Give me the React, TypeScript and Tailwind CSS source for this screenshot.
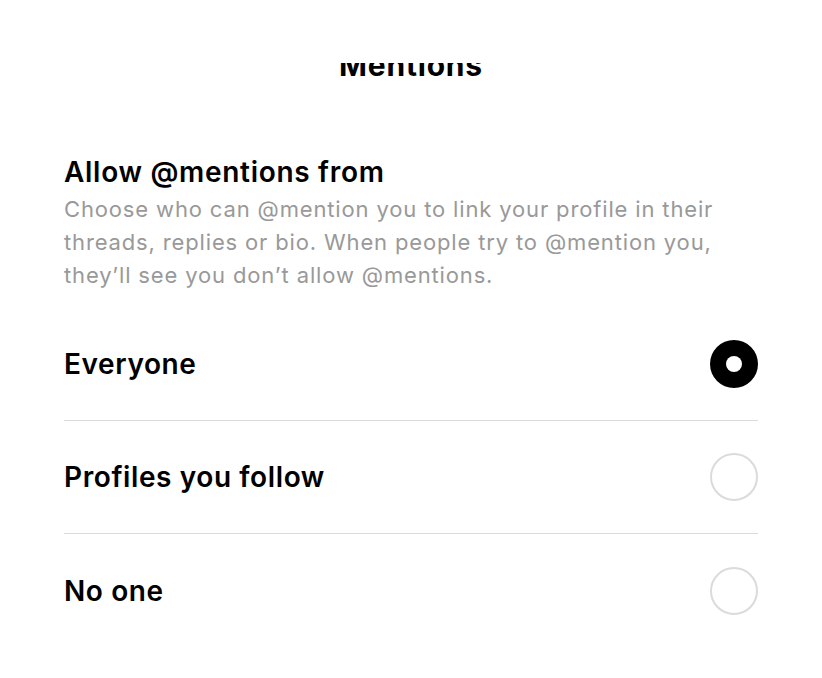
import { useState } from "react";

const options = ["Everyone", "Profiles you follow", "No one"];

export default function App() {
  const [selected, setSelected] = useState("Everyone");

  return (
    <div className="h-[678px] w-full overflow-hidden bg-white pt-[63px] font-['Inter',sans-serif] text-black">
      {/* header title, clipped by the sheet edge */}
      <div className="h-[24px] overflow-hidden text-center">
        <h1 className="-mt-[13px] text-[30px] font-bold leading-[30px] tracking-[0.8px]">
          Mentions
        </h1>
      </div>

      <div className="px-16 pt-[67px]">
        <h2 className="text-[28px] font-semibold leading-[36px] tracking-[0.7px]">
          Allow @mentions from
        </h2>
        <p className="mt-[3px] text-[22px] leading-[33px] tracking-[0.85px] text-[#999999]">
          Choose who can @mention you to link your profile in their threads,
          replies or bio. When people try to @mention you, they’ll see you
          don’t allow @mentions.
        </p>

        <div className="mt-[16px] flex flex-col">
          {options.map((option, i) => (
            <button
              key={option}
              onClick={() => setSelected(option)}
              className={`flex h-[113px] items-center justify-between text-left ${
                i < options.length - 1 ? "border-b border-[#dbdbdb]" : ""
              }`}
            >
              <span className="text-[28px] font-semibold leading-[36px] tracking-[0.6px]">
                {option}
              </span>
              <Radio checked={selected === option} />
            </button>
          ))}
        </div>
      </div>
    </div>
  );
}

function Radio({ checked }: { checked: boolean }) {
  if (checked) {
    return (
      <span className="flex h-[48px] w-[48px] items-center justify-center rounded-full bg-black">
        <span className="h-[16px] w-[16px] rounded-full bg-white" />
      </span>
    );
  }
  return <span className="h-[48px] w-[48px] rounded-full border-[2.5px] border-[#dbdbdb]" />;
}
